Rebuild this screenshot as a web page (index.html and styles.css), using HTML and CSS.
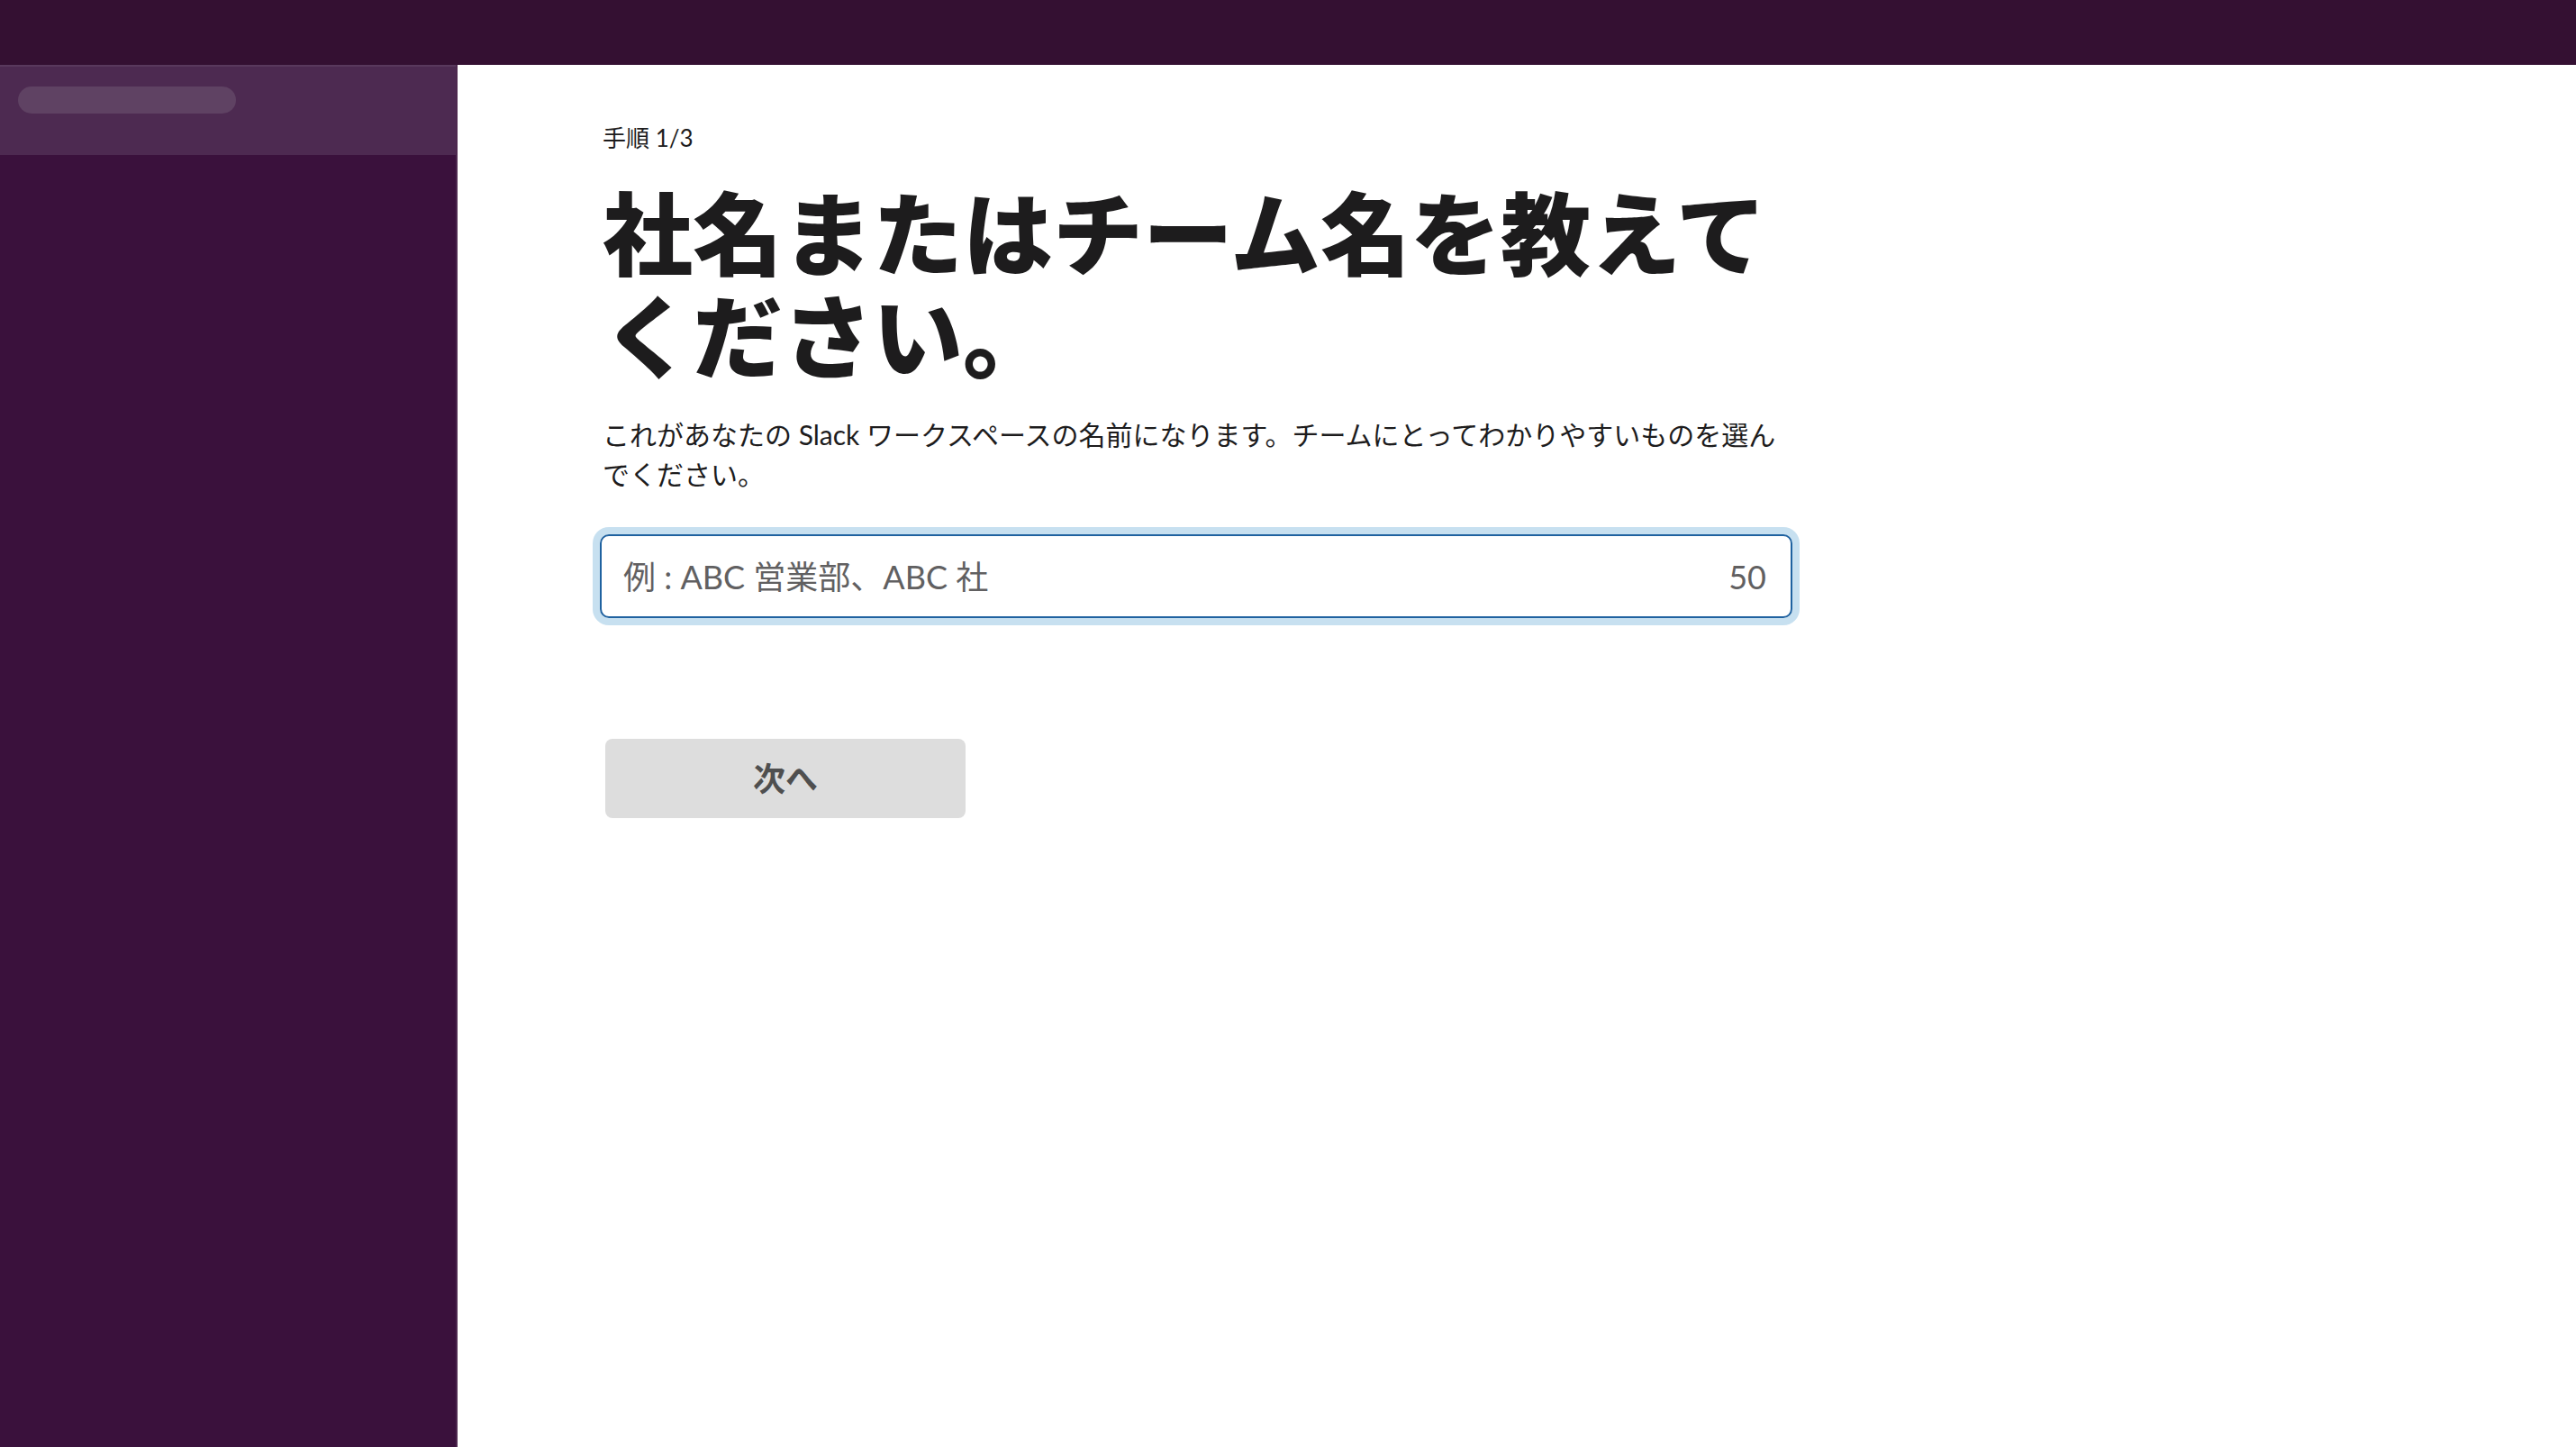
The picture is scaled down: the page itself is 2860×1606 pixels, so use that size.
FILE: index.html
```html
<!DOCTYPE html>
<html lang="ja">
<head>
  <meta charset="UTF-8" />
  <meta name="viewport" content="width=device-width, initial-scale=1.0"/>
  <title>ワークスペースを作成 | Slack</title>
  <link rel="stylesheet" href="styles.css">
</head>
<body>
  <div class="topbar"></div>

  <div class="layout">
    <aside class="sidebar">
      <div class="sidebar-header">
        <div class="pill"></div>
      </div>
    </aside>

    <main class="main">
      <div class="step">
        <p class="step-label">手順 1/3</p>
        <h1 class="title">社名またはチーム名を教えてください。</h1>
        <p class="desc">これがあなたの Slack ワークスペースの名前になります。チームにとってわかりやすいものを選んでください。</p>

        <label class="field">
          <input class="field-input" type="text" placeholder="例 : ABC 営業部、ABC 社" maxlength="50">
          <span class="field-count">50</span>
        </label>

        <button class="btn-next" disabled>次へ</button>
      </div>
    </main>
  </div>
</body>
</html>
```

FILE: styles.css
```css
:root {
  --aubergine: #341032;
  --sidebar: #3a113c;
  --sidebar-top: #4d2a51;
  --pill: #5f4263;
  --text: #1d1c1d;
  --muted: #616061;
  --focus: #1f62a0;
  --glow: #c7e0f0;
}

* {
  box-sizing: border-box;
  margin: 0;
  padding: 0;
}

body {
  font-family: Lato, "Noto Sans CJK JP", sans-serif;
  color: var(--text);
  background: #fff;
  height: 100vh;
  display: flex;
  flex-direction: column;
  overflow: hidden;
}

.topbar {
  height: 72px;
  background: var(--aubergine);
  flex-shrink: 0;
}

.layout {
  flex: 1;
  display: flex;
}

.sidebar {
  width: 508px;
  background: var(--sidebar);
  border-right: 2px solid rgba(255, 255, 255, 0.1);
}

.sidebar-header {
  height: 100px;
  background: var(--sidebar-top);
  border-top: 2px solid rgba(255, 255, 255, 0.07);
  padding: 22px 0 0 20px;
}

.pill {
  width: 242px;
  height: 30px;
  border-radius: 15px;
  background: var(--pill);
}

.main {
  flex: 1;
  padding: 62px 0 0 161px;
}

.step {
  width: 1318px;
}

.step-label {
  font-size: 26px;
  line-height: 38px;
}

.title {
  margin-top: 30px;
  font-size: 100px;
  line-height: 114px;
  font-weight: 900;
}

.desc {
  margin-top: 30px;
  font-size: 30px;
  line-height: 44px;
}

.field {
  margin: 45px -3px 0;
  height: 93px;
  display: flex;
  align-items: center;
  padding: 0 27px 0 24px;
  border: 2px solid var(--focus);
  border-radius: 10px;
  box-shadow: 0 0 0 8px var(--glow);
}

.field-input {
  flex: 1;
  border: none;
  outline: none;
  background: transparent;
  font-family: Lato, "Noto Sans CJK JP", sans-serif;
  font-size: 36px;
  color: var(--text);
}

.field-input::placeholder {
  color: var(--muted);
}

.field-count {
  font-size: 36px;
  color: var(--muted);
}

.btn-next {
  margin: 134px 0 0 3px;
  width: 400px;
  height: 88px;
  padding-bottom: 5px;
  border: none;
  border-radius: 8px;
  background: #dddddd;
  color: #4f4f4f;
  font-family: Lato, "Noto Sans CJK JP", sans-serif;
  font-size: 36px;
  font-weight: 700;
}
```
